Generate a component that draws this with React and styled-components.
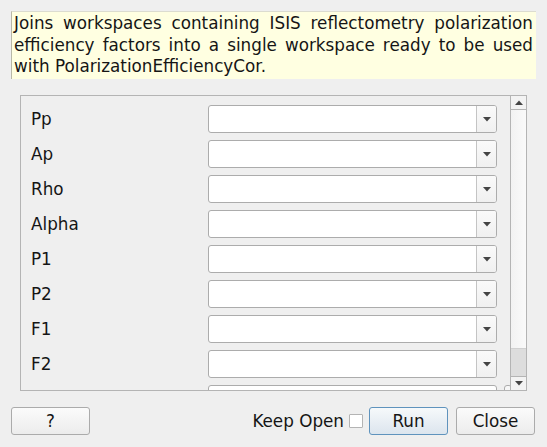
import React from "react";
import styled, { createGlobalStyle } from "styled-components";

const GlobalStyle = createGlobalStyle`
  html, body {
    margin: 0;
    padding: 0;
    background: #efefef;
  }
  body {
    font-family: "DejaVu Sans", "Liberation Sans", sans-serif;
    font-size: 16.8px;
    color: #151515;
  }
`;

const Dialog = styled.div`
  width: 547px;
  height: 447px;
  box-sizing: border-box;
  padding: 11px 11px 0 11px;
  display: flex;
  flex-direction: column;
`;

const Description = styled.div`
  width: 525px;
  height: 68px;
  box-sizing: border-box;
  background: #ffffe1;
  border-left: 1px solid #b8b8a8;
  border-top: 1px solid #dcdcd0;
  padding: 1px 3px 0 2px;
  line-height: 21.5px;
  text-align: justify;
`;

const ScrollArea = styled.div`
  margin: 16px 0 0 9px;
  width: 507px;
  height: 296px;
  box-sizing: border-box;
  border: 1px solid #b4b4b4;
  display: flex;
  overflow: hidden;
`;

const Viewport = styled.div`
  flex: 1;
  overflow: hidden;
  padding: 9px 0 0 10px;
  display: flex;
  flex-direction: column;
  gap: 7px;
`;

const Row = styled.div`
  display: flex;
  align-items: center;
  height: 28px;
  flex-shrink: 0;
`;

const Label = styled.div`
  width: 177px;
  flex-shrink: 0;
`;

const Combo = styled.div`
  width: 289px;
  flex-shrink: 0;
  height: 28px;
  box-sizing: border-box;
  border: 1px solid #acacac;
  border-radius: 3px;
  background: #fff;
  display: flex;
  justify-content: flex-end;
`;

const DropButton = styled.div`
  width: 19px;
  border-left: 1px solid #c4c4c4;
  background: linear-gradient(#fafafa, #f0f0f0);
  border-radius: 0 2px 2px 0;
  display: flex;
  align-items: center;
  justify-content: center;
`;

const Stub = styled.div`
  width: 8px;
  flex-shrink: 0;
  height: 28px;
  margin-left: 7px;
  box-sizing: border-box;
  border: 1px solid #acacac;
  border-radius: 3px;
  background: #f7f7f7;
`;

const ScrollBar = styled.div`
  width: 15px;
  flex-shrink: 0;
  border-left: 1px solid #b4b4b4;
  display: flex;
  flex-direction: column;
  background: linear-gradient(to right, #f2f2f2, #fafafa);
`;

const ArrowButton = styled.div`
  height: ${(p) => p.$h}px;
  display: flex;
  align-items: center;
  justify-content: center;
  background: #f3f3f3;
  border-${(p) => (p.$top ? "bottom" : "top")}: 1px solid #b4b4b4;
`;

const Track = styled.div`
  flex: 1;
  display: flex;
  flex-direction: column;
  justify-content: flex-end;
`;

const Handle = styled.div`
  height: 27px;
  background: #dddddd;
  border-top: 1px solid #d0d0d0;
`;

const Footer = styled.div`
  margin-top: 16px;
  display: flex;
  align-items: center;
  height: 28px;
  padding-right: 1px;
`;

const Button = styled.button`
  width: ${(p) => p.$w || 79}px;
  height: 28px;
  box-sizing: border-box;
  border: 1px solid ${(p) => (p.$default ? "#5f93bd" : "#ababab")};
  border-radius: 3px;
  background: ${(p) =>
    p.$default
      ? "linear-gradient(#f6f9fb, #dce5ee)"
      : "linear-gradient(#fbfbfb, #ececec)"};
  font-family: inherit;
  font-size: 16.8px;
  color: #151515;
  padding: 0;
  margin-left: ${(p) => p.$ml || 0}px;
`;

const KeepOpen = styled.label`
  margin-left: auto;
  display: flex;
  align-items: center;
`;

const Check = styled.span`
  width: 12px;
  height: 12px;
  border: 1px solid #b4b4b4;
  background: #fff;
  margin-left: 5px;
  border-radius: 1px;
`;

const Arrow = ({ up }) => (
  <svg width="8" height="5" viewBox="0 0 8 5">
    <path
      d={up ? "M0 5 L4 0.5 L8 5 Z" : "M0 0 L8 0 L4 4.5 Z"}
      fill="#444"
    />
  </svg>
);

const fields = ["Pp", "Ap", "Rho", "Alpha", "P1", "P2", "F1", "F2"];

export default function App() {
  return (
    <>
      <GlobalStyle />
      <Dialog>
        <Description>
          Joins workspaces containing ISIS reflectometry polarization
          efficiency factors into a single workspace ready to be used with
          PolarizationEfficiencyCor.
        </Description>
        <ScrollArea>
          <Viewport>
            {fields.map((f) => (
              <Row key={f}>
                <Label>{f}</Label>
                <Combo>
                  <DropButton>
                    <Arrow />
                  </DropButton>
                </Combo>
              </Row>
            ))}
            <Row>
              <Label />
              <Combo />
              <Stub />
            </Row>
          </Viewport>
          <ScrollBar>
            <ArrowButton $h={13} $top>
              <Arrow up />
            </ArrowButton>
            <Track>
              <Handle />
            </Track>
            <ArrowButton $h={13}>
              <Arrow />
            </ArrowButton>
          </ScrollBar>
        </ScrollArea>
        <Footer>
          <Button>?</Button>
          <KeepOpen>
            Keep Open
            <Check />
          </KeepOpen>
          <Button $default $ml={6}>
            Run
          </Button>
          <Button $ml={8}>Close</Button>
        </Footer>
      </Dialog>
    </>
  );
}
